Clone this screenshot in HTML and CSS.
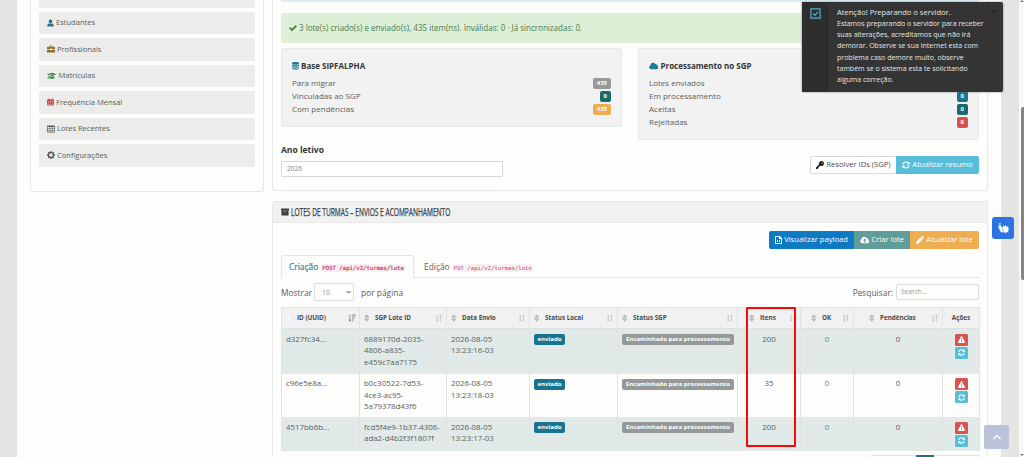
FILE: index.html
```html
<!DOCTYPE html>
<html lang="pt-BR">
<head>
<meta charset="utf-8">
<title>Lotes de Turmas</title>
<link rel="stylesheet" href="styles.css">
</head>
<body>
<svg class="defs" aria-hidden="true">
  <symbol id="user" viewBox="0 0 16 16"><path d="M8 0c2.500 0 4 1.800 4 4.300C12 7 10.200 9 8 9S4 7 4 4.300C4 1.800 5.500 0 8 0zM4.500 9C6.500 11 9.500 11 11.500 9c3 .5 4 2.500 4 7H.5c0-4.500 1-6.500 4-7z"/></symbol>
  <symbol id="case" viewBox="0 0 18 16"><path d="M6 3V1.500C6 .7 6.500 0 7.500 0h3c1 0 1.500.7 1.500 1.500V3h4.500c.8 0 1.500.7 1.500 1.500V8h-7V7H7v1H0V4.500C0 3.700.7 3 1.500 3zm1.500 0h3V1.500h-3zM0 9.500h7V11h4V9.500h7v5c0 .8-.7 1.500-1.500 1.500h-15C.7 16 0 15.300 0 14.500z"/></symbol>
  <symbol id="grad" viewBox="0 0 20 16"><path d="M10 1l10 3.500L10 8 5 6.300 10 5V4L3 5.700V9l1 5H1l1-5V5.300L0 4.500zM5 8l5 1.700L15.500 8v4c-2 2.700-8.500 2.700-10.500 0z"/></symbol>
  <symbol id="cal" viewBox="0 0 16 16"><path fill-rule="evenodd" d="M1 2h2V0h2.500v2h5V0H13v2h2l1 1v12l-1 1H1l-1-1V3zm.5 4.300v1.400h3V6.300zm4.500 0v1.400h4V6.300zm5.500 0v1.400h3V6.300zm-10 3.400v1.400h3V9.700zm4.500 0v1.400h4V9.700zm5.500 0v1.400h3V9.700zm-10 3.300v1.200h3V13zm4.500 0v1.200h4V13zm5.500 0v1.200h3V13z"/></symbol>
  <symbol id="table" viewBox="0 0 18 16"><path fill-rule="evenodd" d="M1.500 0h15L18 1.500v13L16.500 16h-15L0 14.500v-13zM1.500 3.500v2.600h4.300V3.500zm5.700 0v2.600h3.600V3.500zm5 0v2.600h4.300V3.500zM1.500 7.500v2.700h4.300V7.500zm5.700 0v2.700h3.600V7.500zm5 0v2.700h4.300V7.500zM1.500 11.600v2.800h4.300v-2.800zm5.700 0v2.800h3.600v-2.800zm5 0v2.800h4.300v-2.800z"/></symbol>
  <symbol id="gear" viewBox="0 0 16 16"><path fill-rule="evenodd" d="M6.700 0h2.600l.5 2.200 1.300.6L13 1.500 14.500 3l-1.200 2 .5 1.200 2.200.5v2.600l-2.200.5-.5 1.200 1.200 2L13 14.500l-2-1.200-1.200.5L9.300 16H6.700l-.5-2.200-1.200-.5-2 1.200L1.500 13l1.200-2-.5-1.200L0 9.300V6.700l2.200-.5L2.700 5l-1.200-2L3 1.500l2 1.200 1.200-.5zM8 4.500a3.500 3.500 0 1 0 0 7 3.500 3.500 0 0 0 0-7z"/></symbol>
  <symbol id="check" viewBox="0 0 16 16"><path d="M0 8.500l2.500-2.600L6 9.500 13.500 2 16 4.500 6 14.500z"/></symbol>
  <symbol id="db" viewBox="0 0 14 16"><path d="M0 2.500C0-.8 14-.8 14 2.500v1C14 6 0 6 0 3.500zM0 5.600c3 1.600 11 1.600 14 0v2c0 2.600-14 2.600-14 0zm0 4.200c3 1.600 11 1.600 14 0v1.700c0 2.600-14 2.600-14 0zm0 3.900c3 1.600 11 1.600 14 0-.3 3-13.700 3-14 0z"/></symbol>
  <symbol id="cloud" viewBox="0 0 20 16"><path d="M4.500 15A4.500 4.500 0 0 1 3 6.500C3 2.500 6 1 8.500 1c2.300 0 4 1.200 4.800 3C15.500 3.500 17 5 16.700 7.200c4.300 1 4.300 7.800-.7 7.800z"/></symbol>
  <symbol id="cloudup" viewBox="0 0 20 16"><path fill-rule="evenodd" d="M4.500 15A4.500 4.500 0 0 1 3 6.500C3 2.500 6 1 8.500 1c2.300 0 4 1.200 4.800 3C15.500 3.500 17 5 16.700 7.200c4.300 1 4.300 7.800-.7 7.800zM10 5L6 9.300h2.700V13h2.600V9.300H14z"/></symbol>
  <symbol id="key" viewBox="0 0 16 16"><path fill-rule="evenodd" d="M11 0c3 0 5 2 5 5s-2.400 5.200-5 5.200c-.8 0-1.500-.2-2.100-.5L7.500 11.200H6V13H4v2l-1 1H0v-3l6.300-6.300C5 3 7.500 0 11 0zm1 3a1 1 0 1 0 0 2 1 1 0 0 0 0-2z"/></symbol>
  <symbol id="sync" viewBox="0 0 16 16"><path d="M.8 7C1.400 3 4.500.8 8 .8c2 0 3.700.8 5 2L15.200.8v6H9.400l2.200-2.300C9 2 4.700 3 3.400 7zM15.200 9c-.6 4-3.700 6.200-7.200 6.200-2 0-3.700-.8-5-2L.8 15.200v-6h5.800l-2.200 2.300C7 14 11.300 13 12.600 9z"/></symbol>
  <symbol id="box" viewBox="0 0 18 16"><path fill-rule="evenodd" d="M0 0h18v5H0zm1 6h16v10H1zm5.500 1.300v1.400h5V7.300z"/></symbol>
  <symbol id="file" viewBox="0 0 14 16"><path fill-rule="evenodd" d="M1 0h8.500L14 4.500V15l-1 1H1l-1-1V1zm.8 1.800v12.400h10.400V6H8V1.800zM4 8h2v4H4zm4 0h2v4H8z"/></symbol>
  <symbol id="pen" viewBox="0 0 16 16"><path d="M0 16l1-5L9.500 2.500l4 4L5 15zM10.500 1.500L12 .2h1.300L15.800 2.700V4l-1.300 1.500z"/></symbol>
  <symbol id="warn" viewBox="0 0 16 16"><path fill-rule="evenodd" d="M8 0l1 .7 7 13.300-1 2H1l-1-2L7 .7zM7 5l.3 5h1.400L9 5zm0 6.500v2h2v-2z"/></symbol>
  <symbol id="sort" viewBox="0 0 10 14"><path d="M5 0l5 6H0zM5 14L0 8h10z"/></symbol>
  <symbol id="bars" viewBox="0 0 14 14"><path d="M3 1h1.800v9H7l-3 3.500L1 10h2zM8.500 13V4H7l2.500-3L12 4h-1.800v9z"/></symbol>
  <symbol id="desc" viewBox="0 0 14 14"><path d="M2.500 1h1.700v9H6.500l-3.200 3.500L0 10h2.500zM7 1h7v1.700H7zm0 3.500h5.500v1.700H7zM7 8h4v1.700H7zm0 3.300h2.500V13H7z"/></symbol>
</svg>

<div class="page">
  <aside class="side">
    <a class="item"></a>
    <a class="item"><svg class="i blue"><use href="#user"/></svg>Estudantes</a>
    <a class="item"><svg class="i w8 brown"><use href="#case"/></svg>Profissionais</a>
    <a class="item"><svg class="i w10 green"><use href="#grad"/></svg>Matrículas</a>
    <a class="item"><svg class="i red"><use href="#cal"/></svg>Frequência Mensal</a>
    <a class="item"><svg class="i w8"><use href="#table"/></svg>Lotes Recentes</a>
    <a class="item"><svg class="i w8"><use href="#gear"/></svg>Configurações</a>
  </aside>

  <main class="main">
    <section class="card summary">
      <div class="info"></div>
      <div class="success"><svg class="i w8"><use href="#check"/></svg>3 lote(s) criado(s) e enviado(s), 435 item(ns). Inválidas: 0 · Já sincronizadas: 0.</div>
      <div class="wells">
        <div class="well">
          <h4><svg class="i teal"><use href="#db"/></svg>Base SIPFALPHA</h4>
          <p>Para migrar<b class="badge gray">435</b></p>
          <p>Vinculadas ao SGP<b class="badge dark">0</b></p>
          <p>Com pendências<b class="badge orange">435</b></p>
        </div>
        <div class="well">
          <h4><svg class="i w10 teal"><use href="#cloud"/></svg>Processamento no SGP</h4>
          <p>Lotes enviados<b class="badge gray">3</b></p>
          <p>Em processamento<b class="badge tealbg">0</b></p>
          <p>Aceitas<b class="badge dark">0</b></p>
          <p>Rejeitadas<b class="badge redbg">0</b></p>
        </div>
      </div>
      <div class="year">
        <div><label>Ano letivo</label><div class="input">2026</div></div>
        <div class="group">
          <span class="btn plain"><svg class="i w8"><use href="#key"/></svg>Resolver IDs (SGP)</span><span class="btn sky"><svg class="i w8"><use href="#sync"/></svg>Atualizar resumo</span>
        </div>
      </div>
    </section>

    <section class="card lots">
      <header class="head"><svg class="i w8"><use href="#box"/></svg><span class="title">LOTES DE TURMAS – ENVIOS E ACOMPANHAMENTO</span></header>
      <div class="body">
        <div class="actions">
          <span class="btn royal"><svg class="i"><use href="#file"/></svg>Visualizar payload</span><span class="btn sage"><svg class="i w10"><use href="#cloudup"/></svg>Criar lote</span><span class="btn amber"><svg class="i w8"><use href="#pen"/></svg>Atualizar lote</span>
        </div>
        <nav class="tabs">
          <span class="tab on">Criação <code>POST /api/v2/turmas/lote</code></span>
          <span class="tab">Edição <code>PUT /api/v2/turmas/lote</code></span>
        </nav>
        <div class="filter">
          <span>Mostrar</span><span class="select">10<svg viewBox="0 0 10 6"><path d="M1 1l4 4 4-4" fill="none" stroke="#444" stroke-width="2"/></svg></span><span class="per">por página</span>
          <span class="find">Pesquisar:</span><span class="search">Search...</span>
        </div>
        <table>
          <colgroup><col class="c1"><col class="c2"><col class="c3"><col class="c4"><col class="c5"><col class="c6"><col class="c7"><col class="c8"><col class="c9"></colgroup>
          <thead><tr>
            <th><div class="th"><svg class="s pale"><use href="#sort"/></svg>ID (UUID)<svg class="e act"><use href="#desc"/></svg></div></th>
            <th><div class="th"><svg class="s"><use href="#sort"/></svg>SGP Lote ID<svg class="e"><use href="#bars"/></svg></div></th>
            <th><div class="th"><svg class="s"><use href="#sort"/></svg>Data Envio<svg class="e"><use href="#bars"/></svg></div></th>
            <th><div class="th"><svg class="s"><use href="#sort"/></svg>Status Local<svg class="e"><use href="#bars"/></svg></div></th>
            <th><div class="th"><svg class="s"><use href="#sort"/></svg>Status SGP<svg class="e"><use href="#bars"/></svg></div></th>
            <th><div class="th in1"><svg class="s"><use href="#sort"/></svg>Itens<svg class="e"><use href="#bars"/></svg></div></th>
            <th><div class="th in0"><svg class="s"><use href="#sort"/></svg>OK<svg class="e"><use href="#bars"/></svg></div></th>
            <th><div class="th in2"><svg class="s"><use href="#sort"/></svg>Pendências<svg class="e"><use href="#bars"/></svg></div></th>
            <th class="last">Ações</th>
          </tr></thead>
          <tbody>
            <tr class="r1 odd"><td>d327fc34...</td><td>6889170d-2035-<br>4806-a835-<br>e459c7aa7175</td><td>2026-08-05<br>13:23:16-03</td><td><b class="tag tealbg">enviado</b></td><td><b class="tag gray wide">Encaminhado para processamento</b></td><td class="n">200</td><td class="n ok">0</td><td class="n">0</td><td class="n"><i class="mini redbg"><svg><use href="#warn"/></svg></i><i class="mini sky"><svg><use href="#sync"/></svg></i></td></tr>
            <tr class="r2"><td>c96e5e8a...</td><td>b0c30522-7d53-<br>4ce3-ac95-<br>5a79378d43f6</td><td>2026-08-05<br>13:23:18-03</td><td><b class="tag tealbg">enviado</b></td><td><b class="tag gray wide">Encaminhado para processamento</b></td><td class="n">35</td><td class="n ok">0</td><td class="n">0</td><td class="n"><i class="mini redbg"><svg><use href="#warn"/></svg></i><i class="mini sky"><svg><use href="#sync"/></svg></i></td></tr>
            <tr class="r3 odd"><td>4517bb6b...</td><td>fcd5f4e9-1b37-4306-<br>ada2-d4b2f3f1807f</td><td>2026-08-05<br>13:23:17-03</td><td><b class="tag tealbg">enviado</b></td><td><b class="tag gray wide">Encaminhado para processamento</b></td><td class="n">200</td><td class="n ok">0</td><td class="n">0</td><td class="n"><i class="mini redbg"><svg><use href="#warn"/></svg></i><i class="mini sky"><svg><use href="#sync"/></svg></i></td></tr>
          </tbody>
        </table>
        <div class="pager"><span class="prev"></span><span class="cur"></span><span class="next"></span></div>
      </div>
    </section>
  </main>
</div>

<div class="mark"></div>
<div class="toast">
  <div class="tick"><svg viewBox="0 0 12 12"><path d="M1 1h10v10H1zM3.300 6l2 2 3.600-4" fill="none" stroke="#4fb3cf" stroke-width="1.300"/></svg></div>
  <div class="msg"><strong>Atenção! Preparando o servidor.</strong>Estamos preparando o servidor para receber<br>suas alterações, acreditamos que não irá<br>demorar. Observe se sua internet esta com<br>problema caso demore muito, observe<br>também se o sistema esta te solicitando<br>alguma correção.</div>
  <span class="x">×</span>
</div>
<div class="libras"><svg viewBox="0 0 22 22"><path d="M6.500 5l.8 2.800L8.500 5.500l.2 3L6 7.500l1.500 2.700-2 .3 2 1.500c0 2 1.500 3.500 3.300 3.500l.7-2-1.500-1 1-1.500-1.500-1.500zM11 8l1.700 1.500L13.500 8l1 1.700 2-.5-.5 2 1.500 1-1.500 1 .5 2.300-2-.5-1 1.500-1.500-1.500-1.500-.5 1-1.500-1-1.500.8-1z" fill="#fff"/></svg></div>
<div class="top"><svg viewBox="0 0 10 6"><path d="M1.500 5L5 1.500 8.500 5" fill="none" stroke="#fff" stroke-width="1.500"/></svg></div>
<div class="scroll"><i class="up"></i><i class="thumb"></i><i class="down"></i></div>
</body>
</html>
```
FILE: styles.css
```css
* { box-sizing: border-box; }
body { margin: 0; width: 1024px; height: 457px; overflow: hidden; background: #e4e4e3; font: 8.2px/13px "Open Sans", sans-serif; color: #5c5e5e; position: relative; }
.defs { position: absolute; width: 0; height: 0; }
svg { fill: currentColor; display: block; flex: none; }
.page { margin-left: 17px; width: 984px; height: 457px; background: #fdfdfc; display: flex; align-items: flex-start; padding-left: 13px; gap: 8px; overflow: hidden; }
.i { width: 7px; height: 8px; margin-right: 2px; }
.w8 { width: 8px; }
.w10 { width: 9.500px; }
.blue { color: #2f6f91; } .brown { color: #8d6b34; } .green { color: #3f8547; } .red { color: #c0484c; } .teal { color: #1b7b98; }
.side { width: 234px; height: 192px; border: 1px solid #e6e7e7; border-top: 0; border-radius: 0 0 3px 3px; padding: 0 8px; display: flex; flex-direction: column; gap: 3.800px; overflow: hidden; font-size: 7.600px; letter-spacing: -.03px; }
.item { height: 22.700px; flex: none; background: #ececeb; border-radius: 2px; display: flex; align-items: center; padding: 0 0 1px 8px; }
.item:first-child { margin-top: -14.700px; }
.main { width: 716px; }
.card { border: 1px solid #e6e7e7; border-radius: 3px; }
.summary { height: 191px; border-top: 0; border-radius: 0 0 3px 3px; padding: 0 8px; }
.info { height: 2px; background: #d9edf4; }
.success { margin-top: 11px; height: 30px; background: #ddefd6; color: #4b7d50; border-radius: 2px; display: flex; align-items: center; padding: 0 0 1px 8px; font-size: 8.030px; }
.wells { display: flex; align-items: flex-start; gap: 16px; margin-top: 5px; height: 90px; }
.well { flex: 1; background: #f2f2f2; border: 1px solid #e7e8e8; border-radius: 2px; padding: 9.500px 10px 10.800px; font-size: 8px; }
.well h4 { margin: 0 0 4px; font-size: 8px; line-height: 14px; color: #343636; display: flex; align-items: center; }
.well p { margin: 0; height: 12.900px; display: flex; justify-content: space-between; align-items: center; }
.badge { height: 11px; line-height: 11px; padding: 0 4px; border-radius: 2px; color: #fff; font-size: 6px; position: relative; top: .5px; }
.gray { background: #979898; } .dark { background: #1b696b; } .orange { background: #eead51; } .tealbg { background: #19758f; } .redbg { background: #d8524f; } .sky { background: #58bdd9; }
.year { height: 53px; margin-top: 5px; display: flex; justify-content: space-between; }
.year label { display: block; font-weight: 700; font-size: 8.500px; line-height: 14px; color: #343636; }
.input { width: 222px; height: 16px; margin-top: 4px; border: 1px solid #d5dada; background: #fff; font-size: 6.500px; line-height: 14px; padding-left: 5px; color: #808585; border-radius: 1px; }
.group { display: flex; margin-top: 12.500px; }
.btn { height: 18px; display: flex; align-items: center; justify-content: center; font-size: 7.600px; color: #fff; white-space: nowrap; }
.btn.plain { width: 86px; border: 1px solid #d9dcdc; border-right: 0; color: #4c4e4e; background: #fff; border-radius: 2px 0 0 2px; }
.btn.plain svg { color: #222; }
.btn.sky { width: 83px; border-radius: 0 2px 2px 0; }
.lots { margin-top: 10px; height: 300px; }
.head { height: 21px; background: #f1f1f1; border-bottom: 1px solid #eaeaea; padding-left: 8px; display: flex; align-items: center; color: #3a3c3c; }
.title { font: 10.600px "Open Sans", sans-serif; white-space: nowrap; transform: scaleX(.622); transform-origin: 0 50%; -webkit-text-stroke: .25px; }
.body { padding: 7.500px 8px 0; }
.actions { display: flex; justify-content: flex-end; }
.royal { width: 85px; background: #0e7ac4; border-radius: 2px 0 0 2px; }
.sage { width: 56px; background: #5f9d9b; }
.amber { width: 69px; background: #eead51; border-radius: 0 2px 2px 0; }
.tabs { display: flex; margin-top: 6px; height: 23px; border-bottom: 1px solid #e5e7e7; }
.tab { padding: 4px 8px 0; font-size: 8.400px; white-space: nowrap; }
.tab.on { width: 133px; height: 23px; padding: 4px 7px 0; color: #2e86a1; border: 1px solid #e2e5e5; border-bottom: 0; background: #fdfdfc; border-radius: 2px 2px 0 0; -webkit-text-stroke: .2px; }
.tab:not(.on) { padding-left: 10px; padding-top: 5px; }
code { font: 5.650px "DejaVu Sans Mono", monospace; color: #c54068; background: #f8f0f2; padding: 1px; border-radius: 2px; margin-left: 1px; }
.filter { height: 29.500px; display: flex; align-items: center; font-size: 8.400px; }
.select { width: 40px; height: 18px; border: 1px solid #d9dddd; border-radius: 2px; margin-left: 2px; padding: 0 2px 0 7px; display: flex; align-items: center; justify-content: space-between; font-size: 6.800px; color: #909494; }
.select svg { width: 5px; height: 4px; }
.per { margin-left: 7px; }
.find { margin-left: auto; }
.search { width: 83px; height: 16px; border: 1px solid #d9dddd; border-radius: 2px; margin-left: 3px; font-size: 6.600px; line-height: 14px; padding-left: 4px; color: #999d9d; }
table { width: 698px; table-layout: fixed; border-collapse: separate; border-spacing: 0; border-left: 1px solid #e1e4e4; border-top: 1px solid #e1e4e4; }
.c1 { width: 78px; } .c2 { width: 87px; } .c3 { width: 83px; } .c4 { width: 88px; } .c5 { width: 120px; } .c6 { width: 63px; } .c7 { width: 53px; } .c8 { width: 89px; } .c9 { width: 37px; }
th { background: #f0f1f0; height: 21px; padding: 0; font-size: 6.300px; line-height: 12px; color: #4a4c4c; text-align: left; border-right: 1px solid #e1e4e4; border-bottom: 1px solid #dde1e1; }
.th { display: flex; align-items: center; padding: 0 3px 0 4px; }
.in0 { padding-left: 10px; } .in1 { padding-left: 11px; } .in2 { padding-left: 15px; }
.s { width: 5.500px; height: 8px; margin-right: 5.500px; color: #b3b6b6; }
.e { width: 8px; height: 8px; margin-left: auto; color: #c5c8c8; }
.pale { color: #fafafa; } .act { color: #8a8d8d; }
.last { text-align: center; }
td { padding: 4.500px 4px 0; vertical-align: top; font-size: 7.900px; line-height: 11.600px; border-right: 1px solid #dfe4e3; white-space: nowrap; }
.odd td { background: #e1eae8; }
.r1 { height: 44.500px; } .r2 { height: 43.500px; } .r3 { height: 34px; }
.n { text-align: center; }
.ok { color: #5f8b70; }
.tag { display: block; width: 31px; height: 11px; line-height: 11px; font-size: 6px; color: #fff; border-radius: 2px; text-align: center; margin-top: .5px; }
.wide { width: 112px; }
.mini { display: flex; width: 13px; height: 12px; margin: 0 auto 1px; border-radius: 1.500px; align-items: center; justify-content: center; color: #fff; }
.mini svg { width: 7px; height: 7px; }
.pager { display: flex; justify-content: flex-end; margin-top: 4px; }
.pager span { height: 18px; border: 1px solid #e0e3e3; }
.pager .prev { width: 45px; } .pager .cur { width: 18px; background: #19758f; border-color: #19758f; } .pager .next { width: 45px; }
.mark { position: absolute; left: 746px; top: 307px; width: 50px; height: 140px; border: 2px solid #f80808; border-radius: 1px; }
.toast { position: absolute; left: 802px; top: 2px; width: 201px; height: 90px; background: #343434; border-radius: 2px; display: flex; color: #e6e6e6; box-shadow: 0 0 2px #777; }
.tick { width: 26px; background: #2e2e2e; border-right: 1px solid #292929; padding: 6px 0 0 8px; }
.tick svg { width: 11px; height: 11px; }
.msg { padding: 4px 0 0 9px; font-size: 7px; line-height: 11.200px; white-space: nowrap; }
.msg strong { display: block; font-weight: 400; font-size: 7.550px; line-height: 12px; }
.x { position: absolute; right: 7px; top: 2px; color: #171717; font-size: 8px; }
.libras { position: absolute; left: 992px; top: 217px; width: 22px; height: 22px; background: #2b73e0; border-radius: 3px; }
.top { position: absolute; left: 984px; top: 425px; width: 25px; height: 24px; background: #bac3d9; border-radius: 2px; display: flex; align-items: center; justify-content: center; }
.top svg { width: 10px; height: 6px; }
.scroll { position: absolute; left: 1019px; top: 0; width: 5px; height: 457px; background: #f9f9f9; }
.scroll i { position: absolute; right: 0; }
.thumb { top: 107px; width: 3px; height: 173px; background: #858585; border-radius: 2px 0 0 2px; }
.up { top: 0; border: 2px solid transparent; border-bottom-color: #777; border-top: 0; }
.down { bottom: 1px; border: 2px solid transparent; border-top-color: #777; border-bottom: 0; }
```
